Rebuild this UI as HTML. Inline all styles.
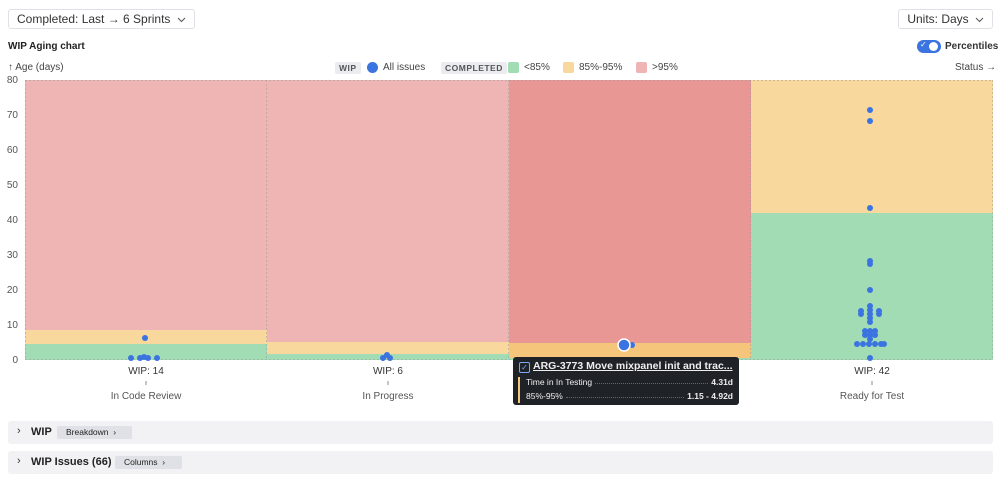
<!DOCTYPE html>
<html><head><style>
body{margin:0;width:999px;height:484px;background:#fff;font-family:"Liberation Sans",sans-serif;color:#222;position:relative;overflow:hidden}
.a{position:absolute}
.btn{border:1px solid #dfe1e6;border-radius:3px;font-size:12px;color:#333;height:18px;line-height:18px;padding:0 8px;box-sizing:content-box;white-space:nowrap}
.lg{font-size:10px;color:#444}
.tag{background:#ebecf0;font-size:8.5px;font-weight:bold;color:#555;padding:1px 4px;border-radius:2px;letter-spacing:.5px}
.sw{width:11px;height:11px;border-radius:2px}
.yl{font-size:10px;color:#555;width:18px;text-align:right;left:0}
.bar{background:#f2f2f4;border-radius:3px;left:8px;width:985px;height:23px}
</style></head><body>
<div class="a btn" style="left:8px;top:9px">Completed: Last → 6 Sprints <svg width="9" height="6" style="margin-left:3px"><path d="M1 1l3.5 3.5L8 1" fill="none" stroke="#555" stroke-width="1"/></svg></div>
<div class="a btn" style="right:6px;top:9px">Units: Days <svg width="9" height="6" style="margin-left:3px"><path d="M1 1l3.5 3.5L8 1" fill="none" stroke="#555" stroke-width="1"/></svg></div>
<div class="a" style="left:8px;top:41px;font-size:10px;font-weight:bold">WIP Aging chart</div>
<div class="a" style="left:917px;top:40px;width:24px;height:13px;border-radius:7px;background:#3b73e0"><div class="a" style="left:12px;top:2px;width:9px;height:9px;border-radius:50%;background:#fff"></div><span class="a" style="left:3px;top:0px;color:#fff;font-size:8px">✓</span></div>
<div class="a" style="left:945px;top:41px;font-size:10px;font-weight:bold;color:#333">Percentiles</div>
<div class="a lg" style="left:8px;top:62px">↑ Age (days)</div>
<div class="a tag" style="left:335px;top:62px">WIP</div>
<div class="a" style="left:367px;top:62px;width:11px;height:11px;border-radius:50%;background:#3b73e0"></div>
<div class="a lg" style="left:383px;top:62px">All issues</div>
<div class="a tag" style="left:441px;top:62px">COMPLETED</div>
<div class="a sw" style="left:508px;top:62px;background:#a2dcb4"></div><div class="a lg" style="left:524px;top:62px">&lt;85%</div>
<div class="a sw" style="left:563px;top:62px;background:#f8d89c"></div><div class="a lg" style="left:579px;top:62px">85%-95%</div>
<div class="a sw" style="left:636px;top:62px;background:#efb4b4"></div><div class="a lg" style="left:652px;top:62px">&gt;95%</div>
<div class="a lg" style="left:955px;top:62px">Status →</div>
<div class="a yl" style="top:75px">80</div><div class="a yl" style="top:110px">70</div><div class="a yl" style="top:145px">60</div><div class="a yl" style="top:180px">50</div><div class="a yl" style="top:215px">40</div><div class="a yl" style="top:250px">30</div><div class="a yl" style="top:285px">20</div><div class="a yl" style="top:320px">10</div><div class="a yl" style="top:355px">0</div>
<svg class="a" style="left:0;top:0" width="999" height="484">
<rect x="25" y="80" width="242" height="280" fill="#efb4b4"/><rect x="25" y="330" width="242" height="14" fill="#f8d89c"/><rect x="25" y="344" width="242" height="16" fill="#a2dcb4"/>
<rect x="267" y="80" width="242" height="280" fill="#efb4b4"/><rect x="267" y="342" width="242" height="12" fill="#f8d89c"/><rect x="267" y="354" width="242" height="6" fill="#a2dcb4"/>
<rect x="509" y="80" width="242" height="280" fill="#e99794"/><rect x="509" y="343" width="242" height="15" fill="#f5c57c"/><rect x="509" y="358" width="242" height="2" fill="#a2dcb4"/>
<rect x="751" y="80" width="242" height="133" fill="#f8d89c"/><rect x="751" y="213" width="242" height="147" fill="#a2dcb4"/>
<g stroke="#999" stroke-opacity=".5" stroke-dasharray="2,2" stroke-width="1">
<line x1="25" x2="993" y1="80.5" y2="80.5"/><line x1="25" x2="993" y1="359.5" y2="359.5"/>
<line x1="25.5" x2="25.5" y1="80" y2="360"/><line x1="266.5" x2="266.5" y1="80" y2="360"/><line x1="508.5" x2="508.5" y1="80" y2="360"/><line x1="750.5" x2="750.5" y1="80" y2="360"/><line x1="992.5" x2="992.5" y1="80" y2="360"/></g>
<g fill="#3b73e0">
<circle cx="145" cy="338" r="3"/><circle cx="131" cy="358" r="3"/><circle cx="140" cy="358" r="3"/><circle cx="144" cy="357" r="3"/><circle cx="148" cy="358" r="3"/><circle cx="157" cy="358" r="3"/>
<circle cx="383" cy="358" r="3"/><circle cx="387" cy="355" r="3"/><circle cx="390" cy="358" r="3"/>
<circle cx="632" cy="345" r="3"/><circle cx="624" cy="345" r="6" stroke="#fff" stroke-width="1.5"/>
<circle cx="870" cy="110" r="3"/><circle cx="870" cy="121" r="3"/><circle cx="870" cy="208" r="3"/><circle cx="870" cy="261" r="3"/><circle cx="870" cy="264" r="3"/><circle cx="870" cy="290" r="3"/>
<circle cx="870" cy="306" r="3"/><circle cx="870" cy="310" r="3"/><circle cx="870" cy="314" r="3"/><circle cx="870" cy="318" r="3"/><circle cx="861" cy="311" r="3"/><circle cx="879" cy="311" r="3"/><circle cx="861" cy="314" r="3"/><circle cx="879" cy="314" r="3"/><circle cx="870" cy="322" r="3"/>
<circle cx="865" cy="331" r="3"/><circle cx="870" cy="331" r="3"/><circle cx="875" cy="331" r="3"/><circle cx="865" cy="335" r="3"/><circle cx="870" cy="335" r="3"/><circle cx="875" cy="335" r="3"/><circle cx="870" cy="339" r="3"/>
<circle cx="857" cy="344" r="3"/><circle cx="863" cy="344" r="3"/><circle cx="869" cy="344" r="3"/><circle cx="875" cy="344" r="3"/><circle cx="881" cy="344" r="3"/><circle cx="884" cy="344" r="3"/><circle cx="870" cy="358" r="3"/></g>
<g stroke="#888"><line x1="146" x2="146" y1="381" y2="385"/><line x1="388" x2="388" y1="381" y2="385"/><line x1="872" x2="872" y1="381" y2="385"/></g>
</svg>
<div class="a" style="left:96px;top:366px;width:100px;text-align:center;font-size:10px;color:#333">WIP: 14</div>
<div class="a" style="left:96px;top:391px;width:100px;text-align:center;font-size:10px;color:#555">In Code Review</div>
<div class="a" style="left:338px;top:366px;width:100px;text-align:center;font-size:10px;color:#333">WIP: 6</div>
<div class="a" style="left:338px;top:391px;width:100px;text-align:center;font-size:10px;color:#555">In Progress</div>
<div class="a" style="left:822px;top:366px;width:100px;text-align:center;font-size:10px;color:#333">WIP: 42</div>
<div class="a" style="left:822px;top:391px;width:100px;text-align:center;font-size:10px;color:#555">Ready for Test</div>
<div class="a" style="left:513px;top:357px;width:226px;height:48px;background:#1f2328;border-radius:3px;color:#eee">
<div class="a" style="left:6px;top:5px;width:9px;height:9px;border:1px solid #7aa7ff;border-radius:2px;color:#7aa7ff;font-size:8px;line-height:9px;text-align:center">✓</div>
<div class="a" style="left:20px;top:3px;font-size:10.5px;font-weight:bold;text-decoration:underline;white-space:nowrap">ARG-3773 Move mixpanel init and trac...</div>
<div class="a" style="left:5px;top:20px;width:2px;height:26px;background:#f5c57c"></div>
<div class="a" style="left:13px;top:20px;width:207px;font-size:8.5px;display:flex"><span>Time in In Testing</span><span style="flex:1;border-bottom:1px dotted #666;margin:0 3px 3px"></span><b>4.31d</b></div>
<div class="a" style="left:13px;top:34px;width:207px;font-size:8.5px;display:flex"><span>85%-95%</span><span style="flex:1;border-bottom:1px dotted #666;margin:0 3px 3px"></span><b>1.15 - 4.92d</b></div>
</div>
<div class="a bar" style="top:421px"><span class="a" style="left:9px;top:4px;font-size:11px;color:#333">›</span><b class="a" style="left:23px;top:5px;font-size:11px">WIP</b><span class="a" style="left:49px;top:5px;width:75px;height:13px;background:#dfe1e6;border-radius:2px;font-size:8.5px;line-height:13px;padding-left:9px;box-sizing:border-box">Breakdown &nbsp;›</span></div>
<div class="a bar" style="top:451px"><span class="a" style="left:9px;top:4px;font-size:11px;color:#333">›</span><b class="a" style="left:23px;top:5px;font-size:11px">WIP Issues (66)</b><span class="a" style="left:107px;top:5px;width:67px;height:13px;background:#dfe1e6;border-radius:2px;font-size:8.5px;line-height:13px;padding-left:9px;box-sizing:border-box">Columns &nbsp;›</span></div>
</body></html>
